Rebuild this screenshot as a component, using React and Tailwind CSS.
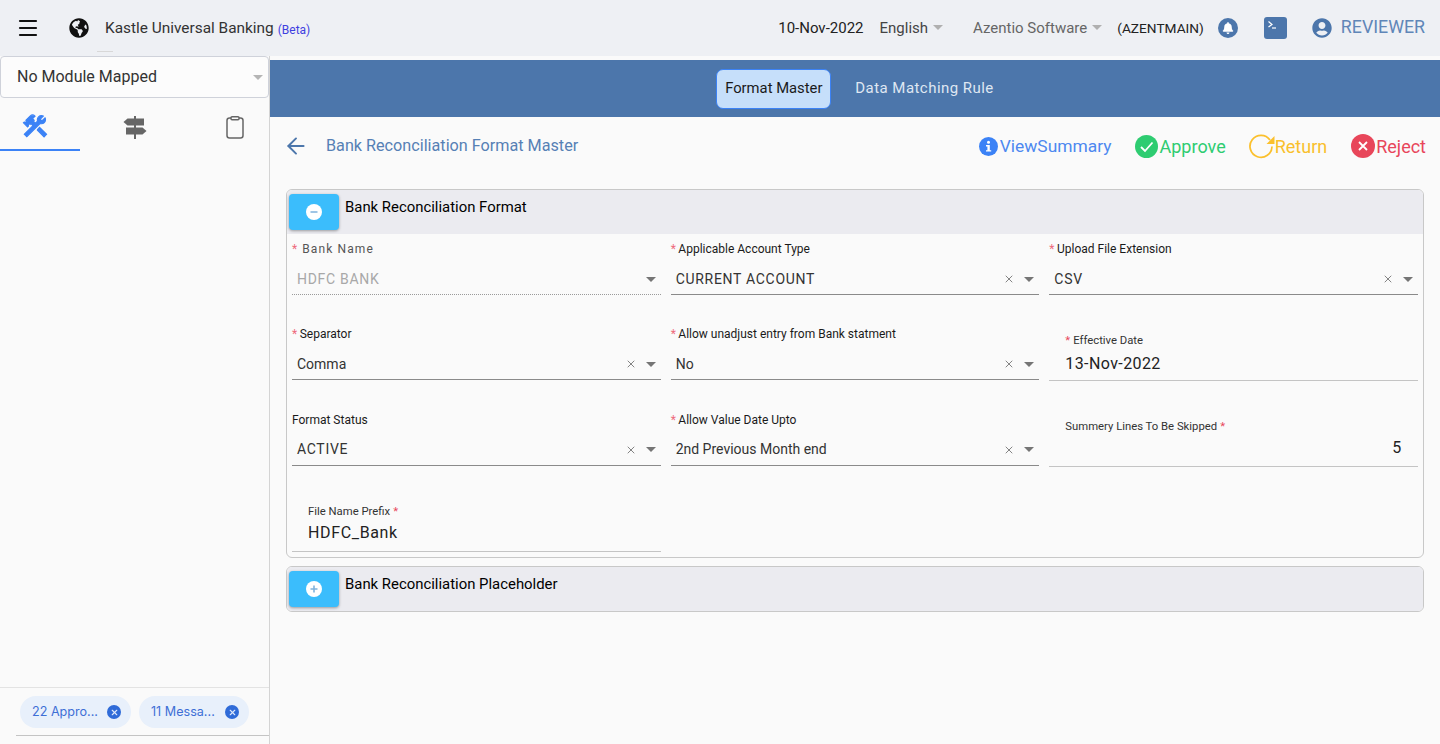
import { FaGlobeAmericas, FaBell, FaUserCircle } from 'react-icons/fa';
import { Menu, ArrowLeft, X } from 'lucide-react';

function Caret({ className = 'border-t-[#757575]' }) {
  return <span className={`inline-block h-0 w-0 border-x-[5px] border-t-[5px] border-x-transparent ${className}`} />;
}

function Star() {
  return <span className="text-[#e8465a]">*</span>;
}

function SelectField({ label, value, required = true, disabled = false, caps = false }) {
  return (
    <div className="flex h-[85.3px] flex-col">
      <label className={`mt-[7px] h-[16px] text-[12px] leading-[16px] ${disabled ? 'tracking-[1.1px] text-[#555]' : 'text-[#1a1a1a]'}`}>
        {required && <span className={`text-[#ee6a7c] ${disabled ? 'mr-[4px]' : 'mr-[2.5px]'}`}>*</span>}
        {label}
      </label>
      <div className={`mt-[6px] flex h-[32px] items-center pl-[5px] pr-[5px] pt-[1px] text-[14px] ${caps ? 'tracking-[0.7px]' : ''} ${disabled ? 'border-b border-dotted border-[#9a9a9a] text-[#a8a8a8]' : 'border-b border-[#8a8a8a] text-[#333]'}`}>
        <span className="flex-1">{value}</span>
        {!disabled && <X size={12} strokeWidth={1.8} className="mr-[9px] text-[#757575]" />}
        <Caret />
      </div>
    </div>
  );
}

function TextField({ label, value, right = false, after = false, lift = false }) {
  return (
    <div className="flex h-[85.3px] flex-col">
      <label className="mt-[14px] h-[16px] pl-[16px] text-[11.3px] leading-[16px] text-[#333]">
        {!after && <span className="mr-[3px]"><Star /></span>}
        {label}
        {after && <span className="ml-[3px]"><Star /></span>}
      </label>
      <div className={`flex h-[32px] items-center border-b border-[#c4c4c4] px-[16px] text-[16px] text-[#222] ${lift ? 'pb-[5px] tracking-[0.65px]' : 'pb-[2px] tracking-[0.4px]'} ${right ? 'justify-end' : ''}`}>
        {value}
      </div>
    </div>
  );
}

function SectionHeader({ title, icon }) {
  return (
    <div className="flex h-[44px] bg-[#ebebf0] pl-[2px] pt-[4px]">
      <div className="flex h-[36px] w-[50px] items-center justify-center rounded-[4px] bg-[#3bbdfc] shadow-[0_1px_3px_rgba(0,0,0,0.35)]">
        {icon}
      </div>
      <span className="ml-[6px] mt-[4px] text-[14.9px] leading-[18px] text-black">{title}</span>
    </div>
  );
}

function RoundIcon({ path }) {
  return (
    <svg width="16" height="16" viewBox="0 0 16 16">
      <circle cx="8" cy="8" r="8" fill="white" />
      <path d={path} stroke="#7fb2dc" strokeWidth="1.6" fill="none" />
    </svg>
  );
}

function Chip({ text, className }) {
  return (
    <div className={`flex h-[32px] items-center rounded-full bg-[#e8f0fb] pl-[12px] pr-[10px] font-['Inter',sans-serif] text-[12.6px] text-[#3e6fd6] ${className}`}>
      <span className="mt-[1px] flex-1">{text}</span>
      <span className="flex h-[14px] w-[14px] items-center justify-center rounded-full bg-[#2f6bd8]">
        <X size={9} strokeWidth={3} className="text-[#dfe9fb]" />
      </span>
    </div>
  );
}

export default function App() {
  return (
    <div className="relative flex h-[744px] w-[1440px] flex-col overflow-hidden bg-[#fafafa] font-['Roboto',sans-serif]">
      <header className="flex h-[56px] shrink-0 items-center bg-[#eef0f4] pl-[16px] pr-[15px]">
        <Menu size={24} strokeWidth={2.2} className="text-[#111]" />
        <FaGlobeAmericas size={20} className="ml-[29px] text-[#111]" />
        <span className="ml-[16px] mt-[1px] text-[15.4px] text-[#333]">Kastle Universal Banking</span>
        <span className="ml-[4px] mt-[3px] text-[12px] text-[#3f3fe0]">(Beta)</span>
        <div className="flex-1" />
        <span className="text-[15px] text-[#222]">10-Nov-2022</span>
        <span className="ml-[16px] text-[15px] text-[#444]">English</span>
        <span className="ml-[5px] mb-[2px] flex"><Caret className="border-t-[#b0b0b0]" /></span>
        <span className="ml-[30px] text-[15px] text-[#666]">Azentio Software</span>
        <span className="ml-[5px] mb-[2px] flex"><Caret className="border-t-[#b0b0b0]" /></span>
        <span className="ml-[15px] text-[13.7px] text-[#222]">(AZENTMAIN)</span>
        <span className="ml-[14px] flex h-[20px] w-[20px] items-center justify-center rounded-full bg-[#4c76ab]">
          <FaBell size={12} className="text-white" />
        </span>
        <span className="ml-[26px] flex h-[22px] w-[23px] rounded-[3px] bg-[#4c76ab] pl-[3px] pt-[3px]">
          <svg width="10" height="10" viewBox="0 0 10 10" fill="none" stroke="white" strokeWidth="1.2">
            <path d="M1.5 1.5 L5 4.5 L1.5 7" />
            <path d="M5 8 H9" />
          </svg>
        </span>
        <FaUserCircle size={20} className="ml-[25px] text-[#4c76ab]" />
        <span className="ml-[9px] mb-[1px] text-[17.8px] text-[#5f86b8]">REVIEWER</span>
      </header>
      <div className="absolute left-[97px] top-[51px] h-px w-[16px] bg-[#d8d8d8]" />

      <div className="flex min-h-0 flex-1">
        <aside className="flex w-[270px] shrink-0 flex-col border-r border-[#d4d4d4]">
          <div className="flex h-[42px] shrink-0 items-center rounded-[4px] border border-[#cfd2da] bg-[#fcfcfc] pl-[16px] pr-[5px] text-[16px] text-[#333]">
            <span className="flex-1">No Module Mapped</span>
            <Caret className="border-t-[#b5b5b5]" />
          </div>
          <div className="flex h-[53px] shrink-0">
            <div className="flex w-[80px] items-center justify-center border-b-2 border-[#3b82f6] pt-[5px] pr-[10px]">
              <svg width="28" height="28" viewBox="0 0 24 24" fill="#3b82f6" stroke="#3b82f6" strokeWidth="1">
                <path d="M13.78 15.3L19.78 21.3L21.89 19.14L15.89 13.14L13.78 15.3M17.5 10.1C17.11 10.1 16.69 10.05 16.36 9.91L4.97 21.25L2.86 19.14L10.27 11.74L8.5 9.96L7.78 10.66L6.33 9.25V12.11L5.63 12.81L2.11 9.25L2.81 8.55H5.62L4.22 7.14L7.78 3.58C8.95 2.41 10.83 2.41 12 3.58L9.89 5.74L11.3 7.14L10.59 7.85L12.38 9.63L14.2 7.75C14.06 7.42 14 7 14 6.63C14 4.66 15.56 3.11 17.5 3.11C18.09 3.11 18.61 3.25 19.08 3.53L16.41 6.2L17.91 7.7L20.58 5.03C20.86 5.5 21 6 21 6.63C21 8.59 19.44 10.1 17.5 10.1Z" />
              </svg>
            </div>
            <div className="ml-[20px] flex w-[70px] items-center justify-center pt-[5px]">
              <svg width="24" height="23" viewBox="0 0 24 23" fill="#666">
                <path d="M11 0H13V23H11Z" />
                <path d="M4.5 2.5H21V9.5H4.5L0.5 6Z" />
                <path d="M3 11.5H19.5L23.5 15L19.5 18.5H3Z" />
              </svg>
            </div>
            <div className="ml-[31px] flex w-[68px] items-center justify-center pt-[5px]">
              <svg width="18" height="23" viewBox="0 0 18 23" fill="none" stroke="#666" strokeWidth="1.5">
                <rect x="1" y="2" width="16" height="20" rx="2.5" />
                <rect x="5" y="0.8" width="8" height="3" rx="1" fill="#fafafa" />
              </svg>
            </div>
          </div>
          <div className="flex-1" />
          <div className="flex h-[57px] shrink-0 flex-col border-t border-[#e3e3e3]">
            <div className="flex flex-1 items-center gap-[8px] pl-[20px] pt-[1px]">
              <Chip text="22 Appro..." className="w-[111px]" />
              <Chip text="11 Messa..." className="w-[110px]" />
            </div>
            <div className="ml-[16px] border-b border-[#c4c4c4]" />
            <div className="h-[8px]" />
          </div>
        </aside>

        <main className="flex min-w-0 flex-1 flex-col">
          <div className="mt-[4px] flex h-[57px] shrink-0 items-center justify-center bg-[#4c76ab]">
            <div className="flex h-[40px] w-[115px] items-center justify-center rounded-[7px] border border-[#3b82f6] bg-[#c6dffa] text-[14.8px] text-[#1a1a1a]">
              Format Master
            </div>
            <div className="ml-[24px] text-[15px] tracking-[0.45px] text-[#dfe7f2]">Data Matching Rule</div>
          </div>

          <div className="flex h-[72px] shrink-0 items-center pb-[14px] pl-[16px] pr-[14px]">
            <ArrowLeft size={26} strokeWidth={1.8} className="ml-[-3px] text-[#4c76ab]" />
            <span className="ml-[17px] text-[16.2px] text-[#5680b5]">Bank Reconciliation Format Master</span>
            <div className="flex-1" />
            <svg width="19" height="19" viewBox="0 0 19 19">
              <circle cx="9.5" cy="9.5" r="9.5" fill="#3b82f6" />
              <circle cx="9.5" cy="5.2" r="1.5" fill="white" />
              <path d="M7 8H10.8V13.2H12.2V14.6H7V13.2H8.4V9.4H7Z" fill="white" />
            </svg>
            <span className="ml-[2px] text-[17.4px] text-[#4d88f0]">ViewSummary</span>
            <svg width="23" height="23" viewBox="0 0 23 23" className="ml-[23px]">
              <circle cx="11.5" cy="11.5" r="11.5" fill="#2ecc71" />
              <path d="M6 12L10 16L17.5 7.5" fill="none" stroke="white" strokeWidth="1.8" />
            </svg>
            <span className="ml-[2px] text-[18px] text-[#2ecc71]">Approve</span>
            <svg width="26" height="26" viewBox="0 0 26 26" className="ml-[23px]">
              <path d="M21 7A11 11 0 1 0 23 13.5" fill="none" stroke="#fbc02d" strokeWidth="1.8" />
              <path d="M25.5 3V11H17.5Z" fill="#fbc02d" />
            </svg>
            <span className="text-[18px] text-[#f9bf2c]">Return</span>
            <svg width="24" height="24" viewBox="0 0 24 24" className="ml-[24px]">
              <circle cx="12" cy="12" r="12" fill="#e8465a" />
              <path d="M8 8L16 16M16 8L8 16" stroke="white" strokeWidth="1.8" />
            </svg>
            <span className="ml-[1px] text-[18px] text-[#e8465a]">Reject</span>
          </div>

          <div className="ml-[16px] mr-[16px]">
            <section className="h-[369px] overflow-hidden rounded-[6px] border border-[#c8c8c8]">
              <SectionHeader title="Bank Reconciliation Format" icon={<RoundIcon path="M4.5 8H11.5" />} />
              <div className="grid grid-cols-3 gap-x-[10px] pl-[5px] pr-[5px]">
                <SelectField label="Bank Name" value="HDFC BANK" disabled caps />
                <SelectField label="Applicable Account Type" value="CURRENT ACCOUNT" caps />
                <SelectField label="Upload File Extension" value="CSV" caps />
                <SelectField label="Separator" value="Comma" />
                <SelectField label="Allow unadjust entry from Bank statment" value="No" />
                <TextField label="Effective Date" value="13-Nov-2022" />
                <SelectField label="Format Status" value="ACTIVE" required={false} caps />
                <SelectField label="Allow Value Date Upto" value="2nd Previous Month end" />
                <TextField label="Summery Lines To Be Skipped" value="5" right after lift />
                <TextField label="File Name Prefix" value="HDFC_Bank" after lift />
              </div>
            </section>
            <section className="mt-[8px] overflow-hidden rounded-[6px] border border-[#c8c8c8]">
              <SectionHeader title="Bank Reconciliation Placeholder" icon={<RoundIcon path="M4.5 8H11.5M8 4.5V11.5" />} />
            </section>
          </div>
        </main>
      </div>
    </div>
  );
}
